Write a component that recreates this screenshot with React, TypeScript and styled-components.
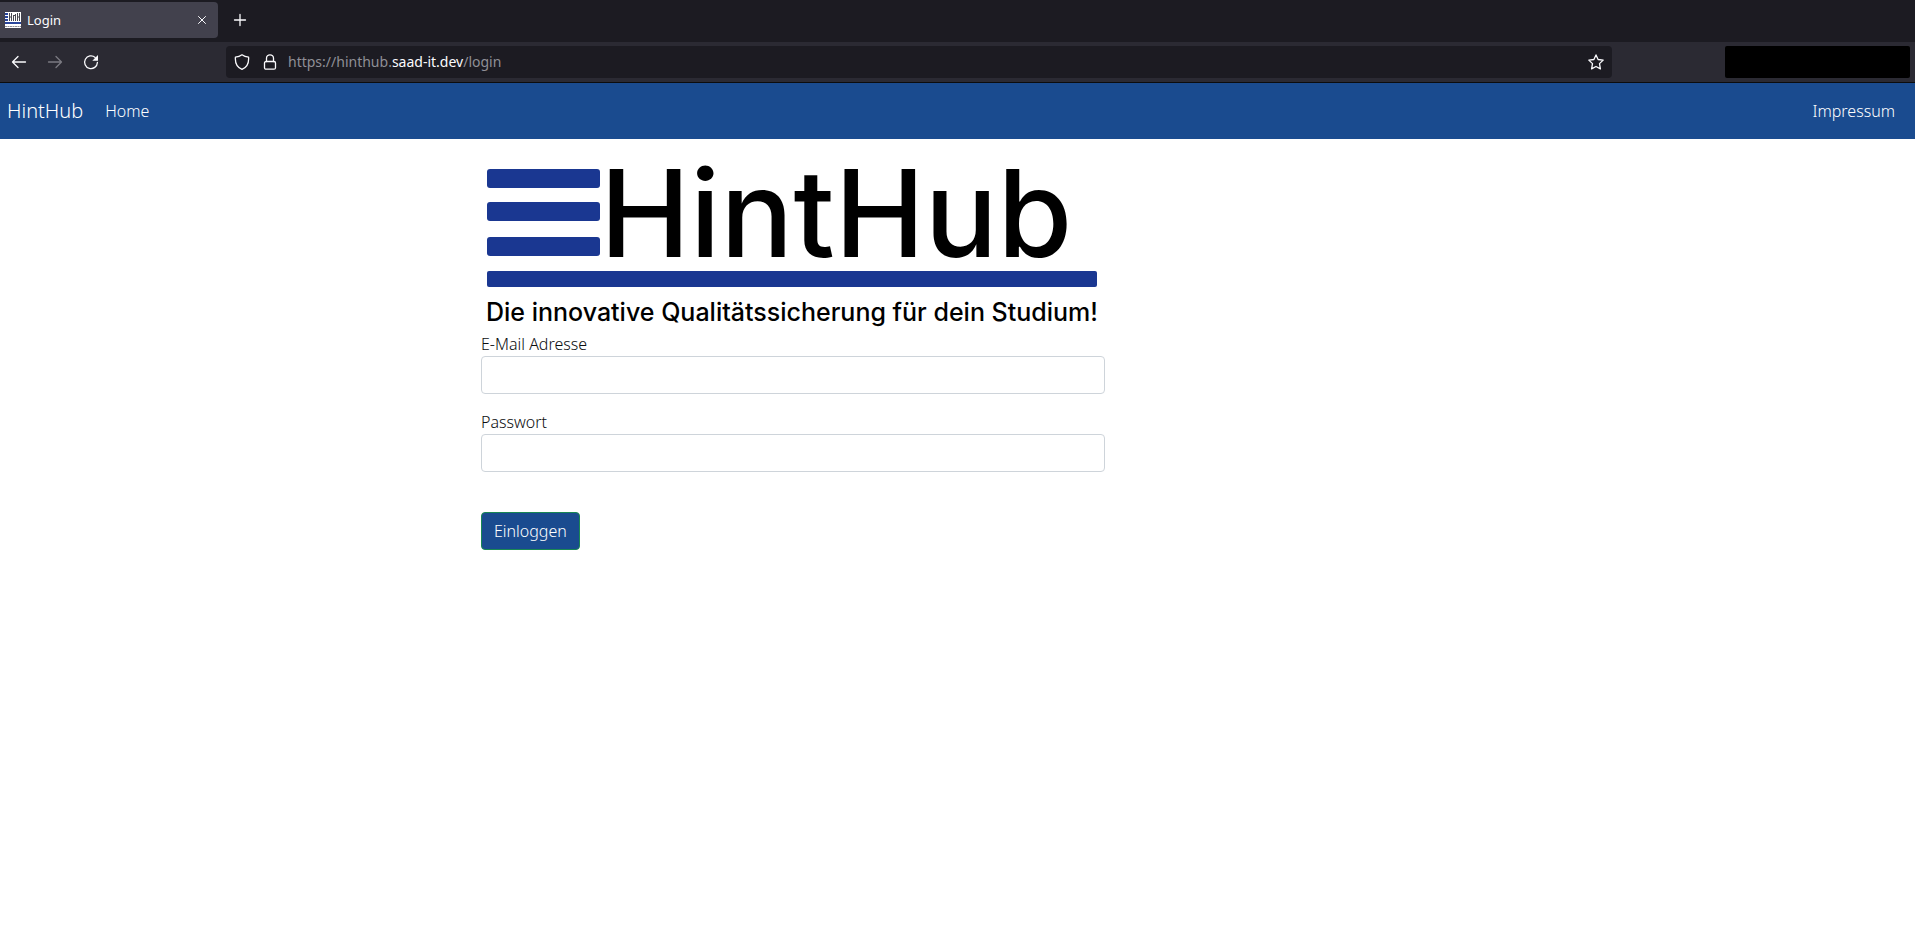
import React from 'react';
import styled, { createGlobalStyle } from 'styled-components';

const GlobalStyle = createGlobalStyle`
  *, *::before, *::after { box-sizing: border-box; }
  body {
    margin: 0;
    background: #ffffff;
    color: #0c0e10;
    font-family: 'Noto Sans', sans-serif;
    font-size: 16px;
    font-weight: 300;
    line-height: 24px;
  }
`;

const TabStrip = styled.div`
  display: flex;
  align-items: center;
  height: 42px;
  padding-bottom: 2px;
  background: #1c1b22;
`;

const Tab = styled.div`
  display: flex;
  align-items: center;
  gap: 6px;
  width: 218px;
  height: 36px;
  padding: 0 8px 0 5px;
  border-radius: 0 4px 4px 0;
  background: #42414d;
  color: #fbfbfe;
  font-size: 13px;
  font-weight: 400;
`;

const TabTitle = styled.span`
  flex: 1;
`;

const IconButton = styled.button<{ $size?: number }>`
  display: flex;
  align-items: center;
  justify-content: center;
  width: ${({ $size = 36 }) => $size}px;
  height: ${({ $size = 36 }) => $size}px;
  padding: 0;
  border: 0;
  background: none;
  color: #fbfbfe;

  &:disabled { color: #7b7a82; }
`;

const NewTabSlot = styled.div`
  padding-left: 4px;
`;

const Toolbar = styled.div`
  display: flex;
  align-items: center;
  height: 41px;
  border-bottom: 1px solid #0c0c0d;
  background: #2b2a33;
`;

const HistoryButtons = styled.div`
  display: flex;
  flex: 0 0 226px;
  padding-left: 1px;
`;

const AddressBar = styled.div`
  display: flex;
  align-items: center;
  flex: 1;
  height: 32px;
  padding: 0 8px;
  border-radius: 4px;
  background: #1c1b22;
  color: #fbfbfe;
  font-size: 14px;
  font-weight: 400;
`;

const AddressIcons = styled.div`
  display: flex;
  gap: 12px;
  padding-right: 10px;
`;

const Address = styled.span`
  flex: 1;
  color: #8f8f96;
`;

const Domain = styled.span`
  color: #fbfbfe;
`;

const ToolbarEnd = styled.div`
  display: flex;
  justify-content: flex-end;
  flex: 0 0 303px;
  padding-right: 5px;
`;

const BlankPanel = styled.div`
  width: 185px;
  height: 32px;
  border-radius: 2px;
  background: #000000;
`;

const Navbar = styled.nav`
  display: flex;
  align-items: center;
  justify-content: space-between;
  height: 56px;
  padding: 0 20px 0 7px;
  background: #1a4b8f;
`;

const NavGroup = styled.div`
  display: flex;
  align-items: center;
  gap: 22px;
`;

const NavLink = styled.a<{ $brand?: boolean }>`
  color: #ffffff;
  font-size: ${({ $brand }) => ($brand ? 20 : 16)}px;
  text-decoration: none;
`;

const Page = styled.main`
  display: grid;
  grid-template-columns: 481fr 624fr 810fr;
`;

const LoginPanel = styled.div`
  grid-column: 2;
`;

const LogoImage = styled.svg`
  display: block;
  width: 100%;
  height: auto;
`;

const Form = styled.form`
  display: flex;
  flex-direction: column;
  align-items: flex-start;
`;

const Field = styled.div`
  display: flex;
  flex-direction: column;
  width: 100%;
  margin-bottom: 16px;
`;

const Input = styled.input`
  width: 100%;
  height: 38px;
  padding: 6px 12px;
  border: 1px solid #ced4da;
  border-radius: 4px;
  background: #ffffff;
  font: inherit;
`;

const SubmitButton = styled.button`
  height: 38px;
  margin-top: 24px;
  padding: 0 12px;
  border: 1px solid #198754;
  border-radius: 4px;
  background: #1a4b8f;
  color: #ffffff;
  font: inherit;
`;

const Favicon = () => (
  <svg width="16" height="16" viewBox="0 0 16 16" aria-hidden="true">
    <path fill="#fff" d="M0 0h16v16H0z" />
    <path fill="#2a469c" d="M0 1h3v2H0zM0 4h3v2H0zM0 7h3v2H0zM0 10h16v2H0z" />
    <path
      fill="none"
      stroke="#4a4a52"
      d="M4.500 1v8M6.500 1v8M4.500 5h2M8.500 3v6M10.500 2v7M12.500 1v8M12.500 5h2M14.500 1v8M9 3.500h2"
    />
    <path stroke="#8c8c94" strokeDasharray="2 .5" d="M0 14.500h16" />
  </svg>
);

const line = {
  fill: 'none',
  stroke: 'currentColor',
  strokeWidth: 1.3,
  strokeLinecap: 'round' as const,
  strokeLinejoin: 'round' as const,
  'aria-hidden': true,
};

const CloseIcon = () => (
  <svg width="16" height="16" viewBox="0 0 16 16" {...line} strokeWidth={1}>
    <path d="M4.500 4.500l7 7M11.500 4.500l-7 7" />
  </svg>
);

const PlusIcon = () => (
  <svg width="16" height="16" viewBox="0 0 16 16" {...line}>
    <path d="M8 2.500v11M2.500 8h11" />
  </svg>
);

const BackIcon = () => (
  <svg width="16" height="16" viewBox="0 0 16 16" {...line}>
    <path d="M14.500 8h-13M7 2.500L1.500 8L7 13.500" />
  </svg>
);

const ForwardIcon = () => (
  <svg width="16" height="16" viewBox="0 0 16 16" {...line}>
    <path d="M1.500 8h13M9 2.500L14.500 8L9 13.500" />
  </svg>
);

const ReloadIcon = () => (
  <svg width="16" height="16" viewBox="0 0 16 16" {...line}>
    <path d="M12.200 3.400A6.400 6.400 0 1 0 14.400 8.500" />
    <path fill="currentColor" stroke="none" d="M15 1v5.300a.5.500 0 0 1-.5.500H9.300z" />
  </svg>
);

const ShieldIcon = () => (
  <svg width="16" height="16" viewBox="0 0 16 16" {...line}>
    <path d="M8 .8C6.300 2 3.800 2.900 1.400 3.200C1 9 3 13.300 8 15.300C13 13.300 15 9 14.600 3.200C12.200 2.900 9.700 2 8 .8z" />
  </svg>
);

const LockIcon = () => (
  <svg width="16" height="16" viewBox="0 0 16 16" {...line}>
    <rect x="2.500" y="7.500" width="11" height="7.700" rx="1.500" />
    <path d="M4.500 7.500V4.300a3.500 3.500 0 0 1 7 0v3.200" />
  </svg>
);

const StarIcon = () => (
  <svg width="16" height="16" viewBox="0 0 16 16" {...line}>
    <path d="M8 .9l2.100 4.600 5.100.6-3.700 3.500.9 5.300L8 12.500l-4.400 2.400.9-5.300L.8 6.100l5.100-.6z" />
  </svg>
);

const Logo = () => (
  <LogoImage viewBox="0 0 624 193" role="img" aria-label="HintHub">
    <g fill="#1a3791">
      <rect x="6" y="30" width="113" height="19" rx="3" />
      <rect x="6" y="63" width="113" height="19" rx="3" />
      <rect x="6" y="98" width="113" height="19" rx="3" />
      <rect x="6" y="132" width="610" height="16" rx="2" />
    </g>
    <g fill="#000" fontFamily="Inter, sans-serif" fontWeight="500">
      <text x="119" y="118" fontSize="121">HintHub</text>
      <text x="5" y="182" fontSize="25">Die innovative Qualitätssicherung für dein Studium!</text>
    </g>
  </LogoImage>
);

export default function App() {
  return (
    <>
      <GlobalStyle />
      <header>
        <TabStrip>
          <Tab>
            <Favicon />
            <TabTitle>Login</TabTitle>
            <IconButton $size={16} aria-label="Close tab"><CloseIcon /></IconButton>
          </Tab>
          <NewTabSlot>
            <IconButton aria-label="New tab"><PlusIcon /></IconButton>
          </NewTabSlot>
        </TabStrip>
        <Toolbar>
          <HistoryButtons>
            <IconButton aria-label="Back"><BackIcon /></IconButton>
            <IconButton aria-label="Forward" disabled><ForwardIcon /></IconButton>
            <IconButton aria-label="Reload"><ReloadIcon /></IconButton>
          </HistoryButtons>
          <AddressBar>
            <AddressIcons>
              <ShieldIcon />
              <LockIcon />
            </AddressIcons>
            <Address>https://hinthub.<Domain>saad-it.dev</Domain>/login</Address>
            <IconButton $size={16} aria-label="Bookmark"><StarIcon /></IconButton>
          </AddressBar>
          <ToolbarEnd><BlankPanel /></ToolbarEnd>
        </Toolbar>
      </header>
      <Navbar>
        <NavGroup>
          <NavLink $brand href="#">HintHub</NavLink>
          <NavLink href="#">Home</NavLink>
        </NavGroup>
        <NavLink href="#">Impressum</NavLink>
      </Navbar>
      <Page>
        <LoginPanel>
          <Logo />
          <Form>
            <Field>
              <label htmlFor="email">E-Mail Adresse</label>
              <Input id="email" type="email" />
            </Field>
            <Field>
              <label htmlFor="password">Passwort</label>
              <Input id="password" type="password" />
            </Field>
            <SubmitButton type="button">Einloggen</SubmitButton>
          </Form>
        </LoginPanel>
      </Page>
    </>
  );
}
